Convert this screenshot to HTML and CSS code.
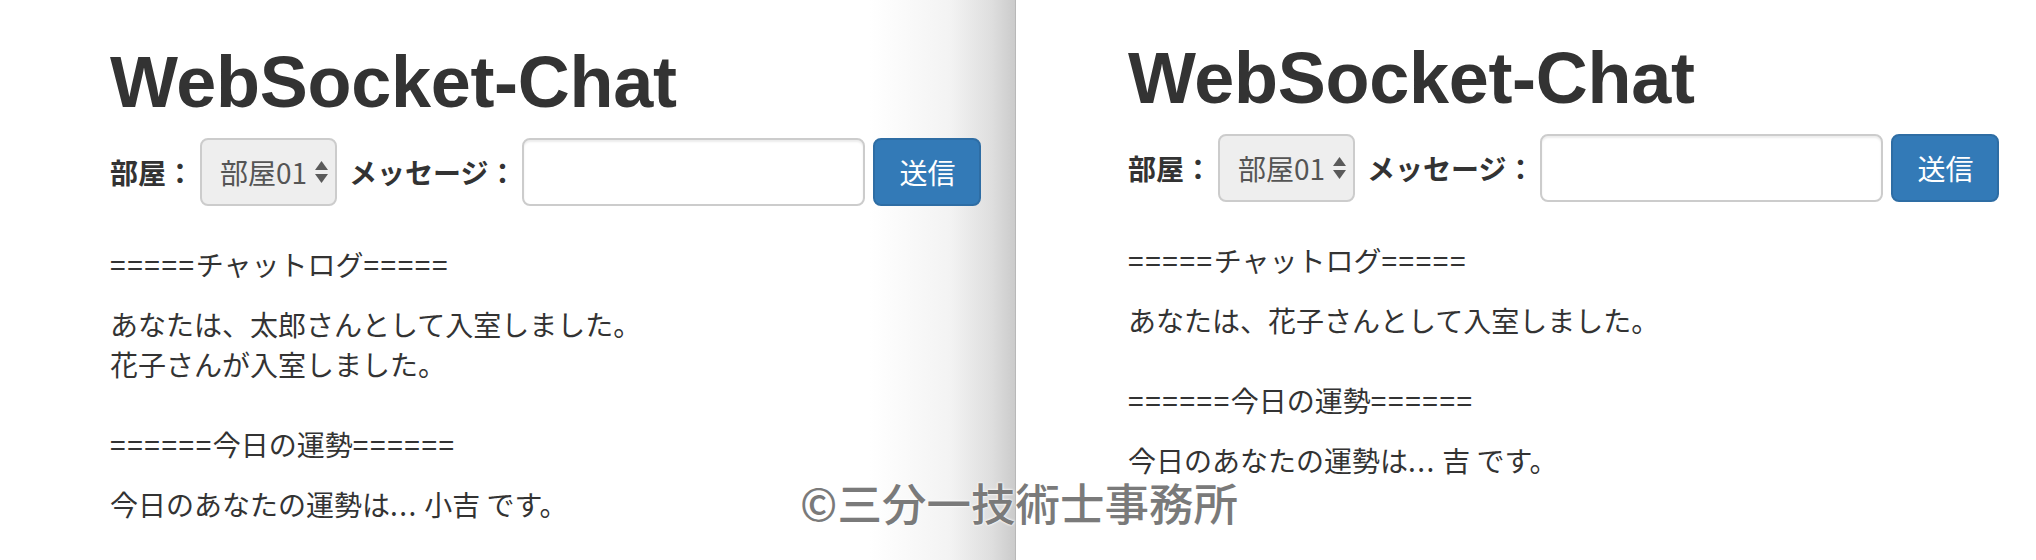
FILE: index.html
```html
<!DOCTYPE html>
<html lang="ja">
<head>
<meta charset="utf-8">
<title>WebSocket-Chat</title>
<link rel="stylesheet" href="styles.css">
</head>
<body>
<div class="spread">
  <section class="pane pane-left">
    <h1 class="title">WebSocket-Chat</h1>
    <form class="chat-form">
      <label class="lbl">部屋：</label>
      <div class="room-select">
        <span class="room-value">部屋01</span>
        <svg class="room-arrows" width="15" height="24" viewBox="0 0 15 24"><polygon points="7.5,1 14,10 1,10" fill="#5a5a5a"/><polygon points="1,14 14,14 7.5,23" fill="#5a5a5a"/></svg>
      </div>
      <label class="lbl lbl-msg">メッセージ：</label>
      <input class="msg-input" type="text">
      <button class="send-btn" type="button">送信</button>
    </form>
    <div class="log">
      <p><span class="eq">=====</span>チャットログ<span class="eq">=====</span></p>
      <p>あなたは、太郎さんとして入室しました。<br>花子さんが入室しました。<br><br><span class="eq">======</span>今日の運勢<span class="eq">======</span></p>
      <p>今日のあなたの運勢は<span class="dots">...</span> 小吉 です。</p>
    </div>
  </section>
  <section class="pane pane-right">
    <h1 class="title">WebSocket-Chat</h1>
    <form class="chat-form">
      <label class="lbl">部屋：</label>
      <div class="room-select">
        <span class="room-value">部屋01</span>
        <svg class="room-arrows" width="15" height="24" viewBox="0 0 15 24"><polygon points="7.5,1 14,10 1,10" fill="#5a5a5a"/><polygon points="1,14 14,14 7.5,23" fill="#5a5a5a"/></svg>
      </div>
      <label class="lbl lbl-msg">メッセージ：</label>
      <input class="msg-input" type="text">
      <button class="send-btn" type="button">送信</button>
    </form>
    <div class="log">
      <p><span class="eq">=====</span>チャットログ<span class="eq">=====</span></p>
      <p>あなたは、花子さんとして入室しました。<br><br><span class="eq">======</span>今日の運勢<span class="eq">======</span></p>
      <p>今日のあなたの運勢は<span class="dots">...</span> 吉 です。</p>
    </div>
  </section>
</div>
<div class="watermark">©三分一技術士事務所</div>
</body>
</html>
```
FILE: styles.css
```css
html, body {
  margin: 0;
  padding: 0;
  background: #fff;
}
body {
  width: 2036px;
  height: 560px;
  overflow: hidden;
  position: relative;
  color: #333;
  font-family: "Noto Sans CJK JP", "Noto Sans", sans-serif;
}
.spread {
  display: flex;
  height: 560px;
}
.pane {
  box-sizing: border-box;
  height: 560px;
}
.pane-left {
  width: 1016px;
  padding: 43px 0 0 110px;
  border-right: 1px solid #b8b8b8;
  background: linear-gradient(to right, #ffffff 0, #ffffff 870px, #f3f3f3 950px, #dedede 992px, #cbcbcb 1015px);
}
.pane-right {
  flex: 1;
  padding: 39px 0 0 112px;
  background: #fff;
}
.title {
  margin: 0;
  font-family: "Liberation Sans", Arial, sans-serif;
  font-weight: 700;
  font-size: 72px;
  line-height: 79px;
  color: #333;
  letter-spacing: -0.3px;
}
.chat-form {
  display: flex;
  align-items: center;
  margin-top: 16px;
  height: 68px;
}
.lbl {
  font-weight: 700;
  font-size: 28px;
  line-height: 40px;
  color: #333;
}
.lbl-msg {
  margin-left: 12px;
}
.room-select {
  box-sizing: border-box;
  display: flex;
  align-items: center;
  width: 137px;
  height: 68px;
  margin-left: 6px;
  padding: 0 6px 0 18px;
  border: 2px solid #cccccc;
  border-radius: 8px;
  background: #eeeeee;
  color: #555;
  font-size: 28px;
}
.room-value {
  line-height: 40px;
  white-space: nowrap;
}
.room-arrows {
  flex-shrink: 0;
  margin-left: auto;
}
.msg-input {
  box-sizing: border-box;
  width: 343px;
  height: 68px;
  margin: 0 0 0 6px;
  padding: 0 24px;
  border: 2px solid #cccccc;
  border-radius: 8px;
  background: #fff;
  box-shadow: inset 0 2px 2px rgba(0,0,0,0.075);
  font-size: 28px;
  outline: none;
}
.send-btn {
  box-sizing: border-box;
  width: 108px;
  height: 68px;
  margin-left: 8px;
  padding: 0;
  border: 2px solid #2e6da4;
  border-radius: 8px;
  background: #337ab7;
  color: #fff;
  font-family: "Noto Sans CJK JP", sans-serif;
  font-size: 28px;
  line-height: 40px;
}
.log {
  margin-top: 38px;
  font-size: 28px;
  line-height: 40px;
  color: #333;
}
.log p {
  margin: 0 0 20px;
}
.eq {
  letter-spacing: 1.6px;
}
.dots {
  letter-spacing: 1.5px;
}
.watermark {
  position: absolute;
  left: 800px;
  top: 482px;
  font-family: "Noto Sans CJK JP", sans-serif;
  font-weight: 500;
  font-size: 44.5px;
  line-height: 40px;
  color: #7a7a7a;
  text-shadow: 0 0 2px #fff, 0 0 3px #fff;
  white-space: nowrap;
}
```
